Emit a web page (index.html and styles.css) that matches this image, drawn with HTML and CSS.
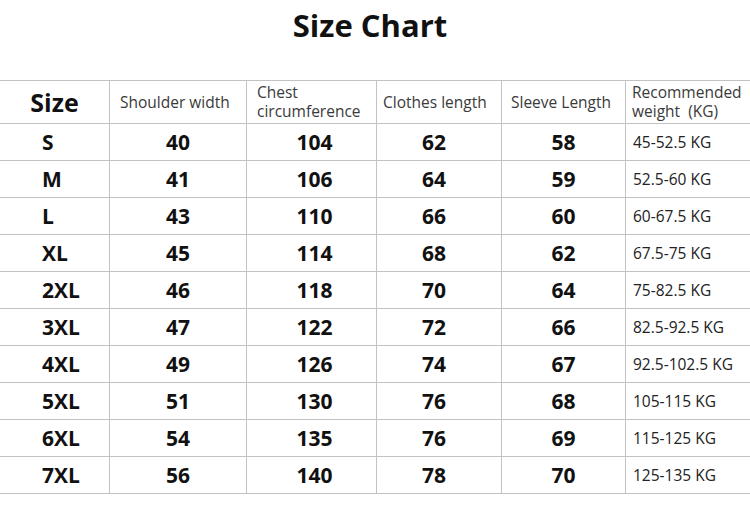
FILE: index.html
```html
<!DOCTYPE html>
<html>
<head>
<meta charset="utf-8">
<link rel="stylesheet" href="styles.css">
</head>
<body>
<div class="page">
  <h1 class="title">Size Chart</h1>
  <div class="chart">
    <div class="cell hd size-hd">Size</div>
    <div class="cell hd pad10">Shoulder width</div>
    <div class="cell hd pad10 two">Chest<br>circumference</div>
    <div class="cell hd pad6">Clothes length</div>
    <div class="cell hd pad9">Sleeve Length</div>
    <div class="cell hd pad6 two last">Recommended<br>weight&nbsp; (KG)</div>

    <div class="cell sz">S</div><div class="cell num">40</div><div class="cell num c3">104</div><div class="cell num c4">62</div><div class="cell num">58</div><div class="cell wt last">45-52.5 KG</div>
    <div class="cell sz">M</div><div class="cell num">41</div><div class="cell num c3">106</div><div class="cell num c4">64</div><div class="cell num">59</div><div class="cell wt last">52.5-60 KG</div>
    <div class="cell sz">L</div><div class="cell num">43</div><div class="cell num c3">110</div><div class="cell num c4">66</div><div class="cell num">60</div><div class="cell wt last">60-67.5 KG</div>
    <div class="cell sz">XL</div><div class="cell num">45</div><div class="cell num c3">114</div><div class="cell num c4">68</div><div class="cell num">62</div><div class="cell wt last">67.5-75 KG</div>
    <div class="cell sz">2XL</div><div class="cell num">46</div><div class="cell num c3">118</div><div class="cell num c4">70</div><div class="cell num">64</div><div class="cell wt last">75-82.5 KG</div>
    <div class="cell sz">3XL</div><div class="cell num">47</div><div class="cell num c3">122</div><div class="cell num c4">72</div><div class="cell num">66</div><div class="cell wt last">82.5-92.5 KG</div>
    <div class="cell sz">4XL</div><div class="cell num">49</div><div class="cell num c3">126</div><div class="cell num c4">74</div><div class="cell num">67</div><div class="cell wt last">92.5-102.5 KG</div>
    <div class="cell sz">5XL</div><div class="cell num">51</div><div class="cell num c3">130</div><div class="cell num c4">76</div><div class="cell num">68</div><div class="cell wt last">105-115 KG</div>
    <div class="cell sz">6XL</div><div class="cell num">54</div><div class="cell num c3">135</div><div class="cell num c4">76</div><div class="cell num">69</div><div class="cell wt last">115-125 KG</div>
    <div class="cell sz">7XL</div><div class="cell num">56</div><div class="cell num c3">140</div><div class="cell num c4">78</div><div class="cell num">70</div><div class="cell wt last">125-135 KG</div>
  </div>
</div>
</body>
</html>
```

FILE: styles.css
```css
html, body {
  margin: 0;
  padding: 0;
  background: #ffffff;
}

body {
  font-family: "Open Sans", "Noto Sans", "Liberation Sans", sans-serif;
  color: #111;
  width: 750px;
  height: 509px;
  overflow: hidden;
}

.page {
  display: flex;
  flex-direction: column;
}

.title {
  margin: 0;
  height: 80px;
  box-sizing: border-box;
  padding: 4px 10px 0 0;
  text-align: center;
  font-size: 31px;
  font-weight: 700;
  line-height: 42px;
  color: #111;
}

.chart {
  display: grid;
  grid-template-columns: 110px 137px 130px 125px 124px 124px;
  grid-template-rows: 43px repeat(10, 37px);
  border-top: 1px solid #c2c2c2;
}

.cell {
  box-sizing: border-box;
  border-bottom: 1px solid #c2c2c2;
  border-right: 1px solid #c2c2c2;
  display: flex;
  align-items: center;
}

.cell.last {
  border-right: none;
}

.hd {
  font-size: 15.5px;
  line-height: 19px;
  color: #3a3a3a;
  font-weight: 400;
}

.hd.two {
  padding-bottom: 1px;
}

.size-hd {
  justify-content: center;
  font-size: 25px;
  font-weight: 700;
  color: #111;
}

.pad10 { padding-left: 10px; }
.pad9 { padding-left: 9px; }
.pad6 { padding-left: 6px; }

.sz {
  padding-left: 42px;
  font-size: 21px;
  font-weight: 700;
  color: #111;
}

.num {
  justify-content: center;
  font-size: 21px;
  font-weight: 700;
  color: #111;
}

.num.c3 { padding-left: 6px; }
.num.c4 { padding-right: 10px; }

.wt {
  padding-left: 7px;
  font-size: 15.5px;
  color: #222;
}
```
